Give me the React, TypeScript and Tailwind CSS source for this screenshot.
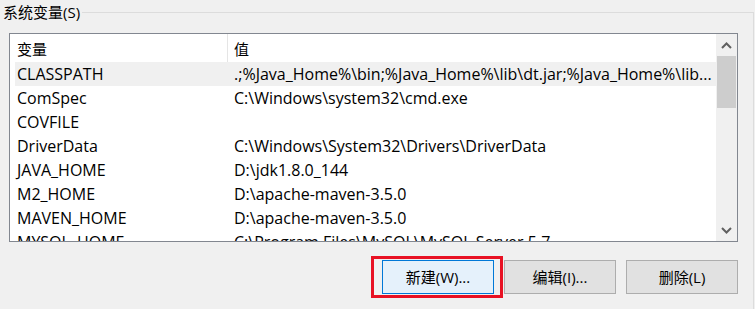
const rows = [
  { name: "CLASSPATH", value: ".;%Java_Home%\\bin;%Java_Home%\\lib\\dt.jar;%Java_Home%\\lib...", hover: true },
  { name: "ComSpec", value: "C:\\Windows\\system32\\cmd.exe" },
  { name: "COVFILE", value: "" },
  { name: "DriverData", value: "C:\\Windows\\System32\\Drivers\\DriverData" },
  { name: "JAVA_HOME", value: "D:\\jdk1.8.0_144" },
  { name: "M2_HOME", value: "D:\\apache-maven-3.5.0" },
  { name: "MAVEN_HOME", value: "D:\\apache-maven-3.5.0" },
  { name: "MYSQL_HOME", value: "C:\\Program Files\\MySQL\\MySQL Server 5.7" },
];

function Chevron({ up }: { up?: boolean }) {
  return (
    <svg width="11" height="7" viewBox="0 0 11 7" className="text-[#606060]">
      <path
        d={up ? "M1 6 L5.5 1.5 L10 6" : "M1 1 L5.5 5.5 L10 1"}
        fill="none"
        stroke="currentColor"
        strokeWidth="2"
      />
    </svg>
  );
}

export default function App() {
  return (
    <div
      className="flex h-[309px] w-[755px] flex-col overflow-hidden bg-[#f0f0f0] text-[15px] text-black"
      style={{ fontFamily: '"Open Sans", "Noto Sans CJK SC", sans-serif' }}
    >
      {/* group box title + top line */}
      <div className="flex h-[24px] w-[754px]">
        <span className="pl-[3px] pr-[2px] leading-[24px]">系统变量(S)</span>
        <div className="mt-[12px] flex-1 border-t border-r border-[#dcdcdc]" />
      </div>

      <div className="flex w-[754px] flex-1 flex-col border-r border-[#dcdcdc] pl-[9px] pt-[9px]">
        {/* list view */}
        <div className="flex h-[209px] w-[729px] border border-[#828790] bg-white">
          <div className="flex-1 overflow-hidden pl-[5px]">
            <div className="flex h-[28px] items-center">
              <div className="w-[212px] pl-[2px] pt-[3px]">变量</div>
              <div className="h-full w-px bg-[#e5e5e5]" />
              <div className="flex-1 pl-[6px] pt-[3px]">值</div>
            </div>
            {rows.map((r) => (
              <div
                key={r.name}
                className={`flex h-[24px] items-center text-[16px] ${r.hover ? "bg-[#f0f0f0]" : ""}`}
              >
                <div className="w-[212px] pl-[2px]">{r.name}</div>
                <div className="w-px" />
                <div className="min-w-0 flex-1 truncate pl-[6px] pr-[4px]">{r.value}</div>
              </div>
            ))}
          </div>
          {/* scrollbar */}
          <div className="flex w-[21px] flex-col bg-[#f0f0f0]">
            <div className="flex h-[22px] items-center justify-center">
              <Chevron up />
            </div>
            <div className="mx-[1px] h-[52px] bg-[#cdcdcd]" />
            <div className="flex-1" />
            <div className="flex h-[22px] items-center justify-center">
              <Chevron />
            </div>
          </div>
        </div>

        {/* buttons */}
        <div className="mt-[18px] flex w-[729px] justify-end gap-[10px]">
          <div className="relative">
            <button className="h-[34px] w-[112px] border border-[#0078d7] bg-[#e5f1fb]">
              新建(W)...
            </button>
            <div className="pointer-events-none absolute -top-[4px] -bottom-[4px] -left-[11px] -right-[9px] border-[3px] border-[#e81123]" />
          </div>
          <button className="h-[34px] w-[112px] border border-[#adadad] bg-[#e1e1e1]">
            编辑(I)...
          </button>
          <button className="h-[34px] w-[112px] border border-[#adadad] bg-[#e1e1e1]">
            删除(L)
          </button>
        </div>
      </div>
    </div>
  );
}
